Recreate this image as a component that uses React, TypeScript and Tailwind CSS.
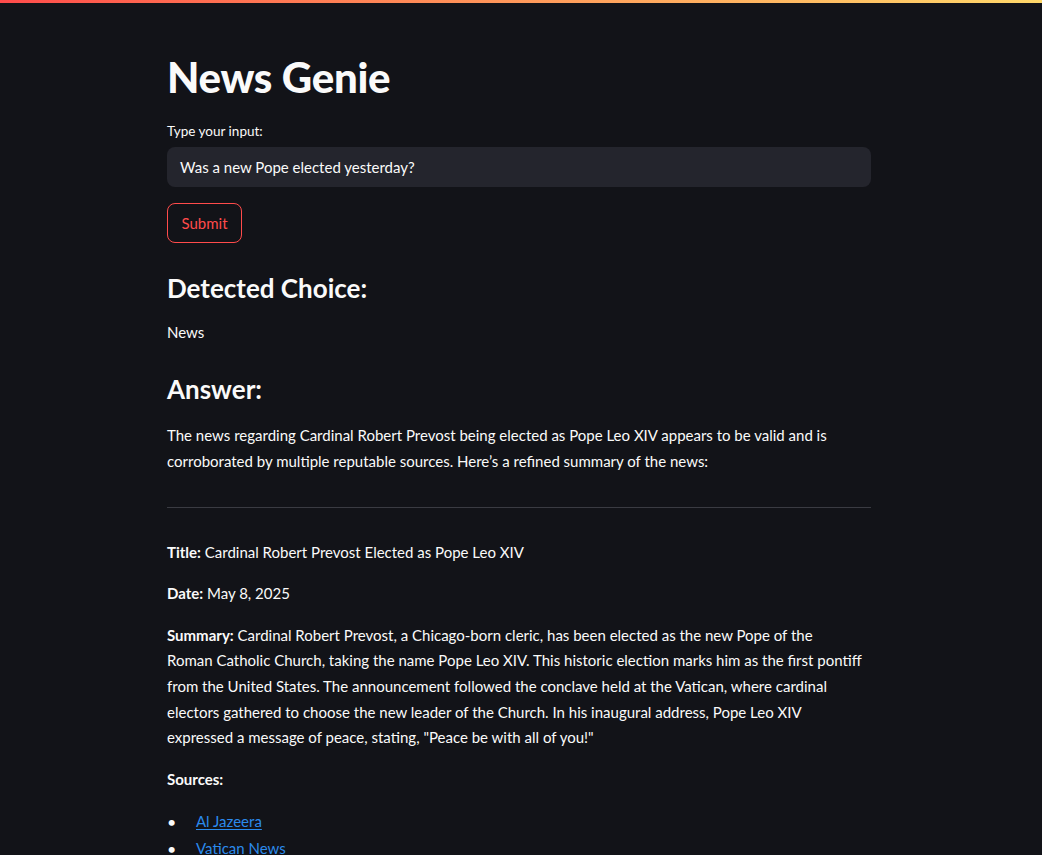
const links = ["Al Jazeera", "Vatican News"];

export default function App() {
  return (
    <div className="min-h-screen bg-[#121318] text-[#fafafa] font-['Lato','Noto_Sans',sans-serif]">
      <div className="h-[3px] bg-gradient-to-r from-[#ff4b4b] to-[#ffd86a]" />

      <main className="ml-[167px] w-[704px] pt-[49px] flex flex-col text-[15px] leading-[25.6px]">
        <h1 className="text-[42px] leading-[1.2] font-black tracking-[-0.3px]">News Genie</h1>

        <label className="mt-[19px] text-[13.5px] leading-[21px]">Type your input:</label>
        <div className="mt-[5px] h-[40px] rounded-lg bg-[#24252d] flex items-center px-[13px]">
          Was a new Pope elected yesterday?
        </div>

        <div className="mt-[16px]">
          <button className="h-[40px] px-[13.5px] rounded-lg border border-[#ff4b4b] text-[#ff4b4b]">
            Submit
          </button>
        </div>

        <h3 className="mt-[30px] text-[26px] leading-[1.2] font-bold">Detected Choice:</h3>
        <p className="mt-[15px]">News</p>

        <h3 className="mt-[29px] text-[26px] leading-[1.2] font-bold">Answer:</h3>
        <p className="mt-[18px] whitespace-nowrap">
          The news regarding Cardinal Robert Prevost being elected as Pope Leo XIV appears to be valid and is
          <br />
          corroborated by multiple reputable sources. Here’s a refined summary of the news:
        </p>

        <hr className="mt-[32px] border-0 border-t border-[#3a3b42]" />

        <p className="mt-[32px]">
          <strong className="font-bold">Title:</strong> Cardinal Robert Prevost Elected as Pope Leo XIV
        </p>
        <p className="mt-[16px]">
          <strong className="font-bold">Date:</strong> May 8, 2025
        </p>
        <p className="mt-[16px] whitespace-nowrap">
          <strong className="font-bold">Summary:</strong> Cardinal Robert Prevost, a Chicago-born cleric, has been
          elected as the new Pope of the
          <br />
          Roman Catholic Church, taking the name Pope Leo XIV. This historic election marks him as the first pontiff
          <br />
          from the United States. The announcement followed the conclave held at the Vatican, where cardinal
          <br />
          electors gathered to choose the new leader of the Church. In his inaugural address, Pope Leo XIV
          <br />
          expressed a message of peace, stating, "Peace be with all of you!"
        </p>
        <p className="mt-[16px]">
          <strong className="font-bold">Sources:</strong>
        </p>
        <ul className="mt-[17px] flex flex-col gap-[1px]">
          {links.map((l) => (
            <li key={l} className="flex">
              <span className="w-[29px] text-[16px]">•</span>
              <a href="#" className="text-[#2b8aeb] underline underline-offset-2">
                {l}
              </a>
            </li>
          ))}
        </ul>
      </main>
    </div>
  );
}
